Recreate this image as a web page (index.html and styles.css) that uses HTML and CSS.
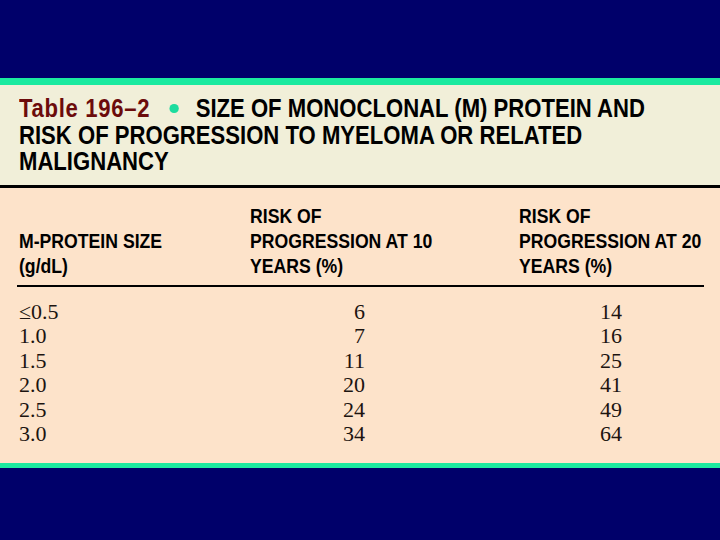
FILE: index.html
```html
<!DOCTYPE html>
<html>
<head>
<meta charset="utf-8">
<link rel="stylesheet" href="styles.css">
</head>
<body>
<div class="slide">
  <div class="band-top"></div>
  <div class="accent"></div>
  <div class="title-box">
    <h1 class="title">
      <span class="cond"><span class="tnum">Table 196–2</span><span class="dot"></span>SIZE OF MONOCLONAL (M) PROTEIN AND</span>
      <span class="cond">RISK OF PROGRESSION TO MYELOMA OR RELATED</span>
      <span class="cond">MALIGNANCY</span>
    </h1>
  </div>
  <div class="thick"></div>
  <div class="body-box">
    <div class="head">
      <div class="h cond">M-PROTEIN SIZE<br>(g/dL)</div>
      <div class="h cond">RISK OF<br>PROGRESSION AT 10<br>YEARS (%)</div>
      <div class="h cond">RISK OF<br>PROGRESSION AT 20<br>YEARS (%)</div>
    </div>
    <div class="data">
      <div class="c">≤0.5</div><div class="n">6</div><div></div><div class="n">14</div>
      <div class="c">1.0</div><div class="n">7</div><div></div><div class="n">16</div>
      <div class="c">1.5</div><div class="n">11</div><div></div><div class="n">25</div>
      <div class="c">2.0</div><div class="n">20</div><div></div><div class="n">41</div>
      <div class="c">2.5</div><div class="n">24</div><div></div><div class="n">49</div>
      <div class="c">3.0</div><div class="n">34</div><div></div><div class="n">64</div>
    </div>
  </div>
  <div class="accent accent-bottom"></div>
  <div class="band-bottom"></div>
</div>
</body>
</html>
```
FILE: styles.css
```css
html, body {
  margin: 0;
  padding: 0;
  background: #00006a;
}
.slide {
  width: 720px;
  height: 540px;
  display: flex;
  flex-direction: column;
  background: #00006a;
}
.band-top {
  height: 78px;
  flex: none;
}
.accent {
  height: 7px;
  background: #1beaa0;
  flex: none;
}
.accent-bottom {
  height: 5px;
}
.band-bottom {
  flex: 1;
}
.cond {
  display: block;
  white-space: nowrap;
  transform: scaleX(0.85);
  transform-origin: 0 0;
}
.title-box {
  height: 100px;
  flex: none;
  background: #f1efd9;
  padding: 10px 19px 0;
  box-sizing: border-box;
}
.title {
  margin: 0;
  font-family: "Liberation Sans", Arial, sans-serif;
  font-weight: bold;
  font-size: 26px;
  line-height: 26.5px;
  color: #000;
}
.tnum {
  color: #6c0b0b;
  letter-spacing: 0.8px;
}
.dot {
  display: inline-block;
  width: 10.5px;
  height: 9px;
  border-radius: 50%;
  background: #1ddc9e;
  margin: 0 20px 0 23px;
  vertical-align: 4px;
}
.thick {
  height: 3px;
  background: #000;
  flex: none;
}
.body-box {
  height: 275px;
  flex: none;
  background: #fde3ca;
  padding: 15px 16px 0 17px;
  box-sizing: border-box;
}
.head {
  display: grid;
  grid-template-columns: 231px 269px 1fr;
  align-items: end;
  border-bottom: 2px solid #000;
  padding: 0 0 7px 2px;
  font-family: "Liberation Sans", Arial, sans-serif;
  font-weight: bold;
  font-size: 21px;
  line-height: 25px;
  color: #000;
}
.h {
  transform: scaleX(0.84);
}
.data {
  display: grid;
  grid-template-columns: 231px 115px 154px 103px;
  padding: 13px 0 0 2px;
  font-family: "Liberation Serif", "Times New Roman", serif;
  font-size: 22px;
  line-height: 24.4px;
  color: #1c1410;
}
.n {
  text-align: right;
}
```
